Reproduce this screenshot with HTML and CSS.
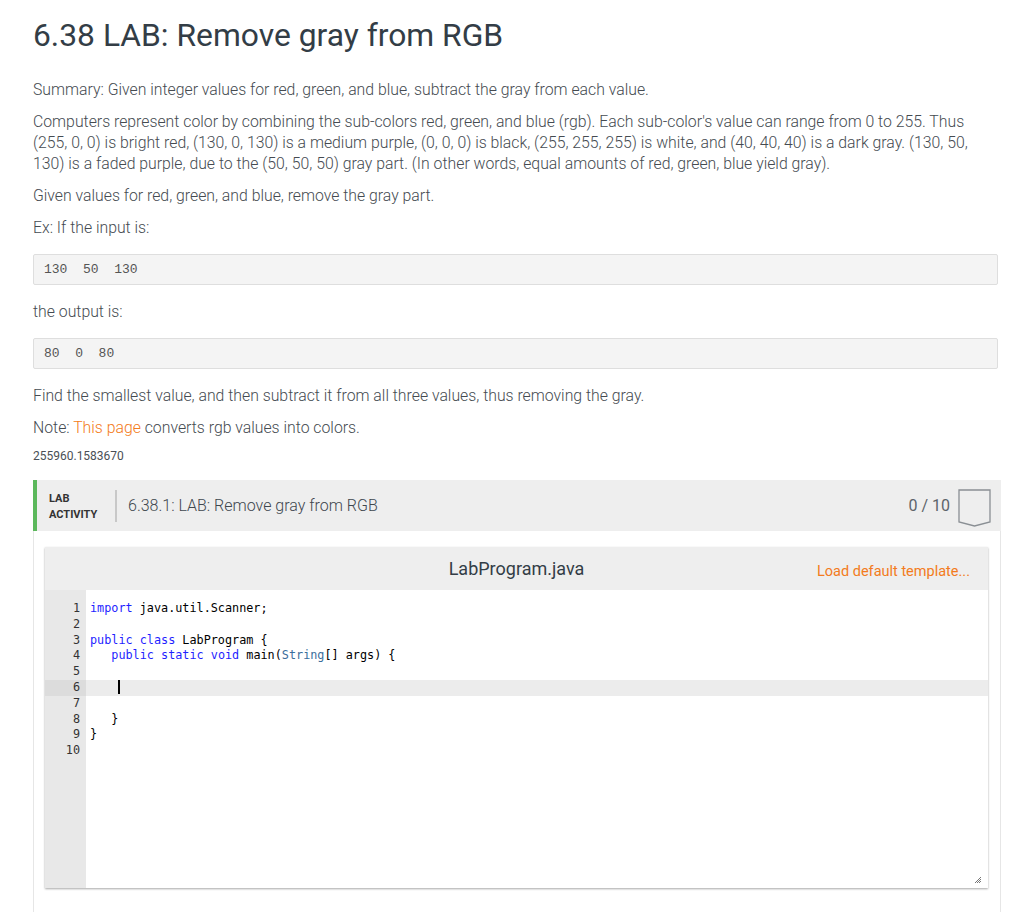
FILE: index.html
```html
<!DOCTYPE html>
<html lang="en">
<head>
<meta charset="utf-8">
<title>6.38 LAB: Remove gray from RGB</title>
<link rel="stylesheet" href="styles.css">
</head>
<body>
<main class="page">
  <h1 class="title">6.38 LAB: Remove gray from RGB</h1>
  <p>Summary: Given integer values for red, green, and blue, subtract the gray from each value.</p>
  <p>Computers represent color by combining the sub-colors red, green, and blue (rgb). Each sub-color's value can range from 0 to 255. Thus (255, 0, 0) is bright red, (130, 0, 130) is a medium purple, (0, 0, 0) is black, (255, 255, 255) is white, and (40, 40, 40) is a dark gray. (130, 50, 130) is a faded purple, due to the (50, 50, 50) gray part. (In other words, equal amounts of red, green, blue yield gray).</p>
  <p>Given values for red, green, and blue, remove the gray part.</p>
  <p>Ex: If the input is:</p>
  <pre class="sample">130  50  130</pre>
  <p>the output is:</p>
  <pre class="sample">80  0  80</pre>
  <p>Find the smallest value, and then subtract it from all three values, thus removing the gray.</p>
  <p>Note: <a class="link" href="#">This page</a> converts rgb values into colors.</p>
  <div class="ident">255960.1583670</div>

  <section class="lab">
    <header class="lab-head">
      <div class="lab-label">LAB<br>ACTIVITY</div>
      <div class="lab-sep"></div>
      <div class="lab-title">6.38.1: LAB: Remove gray from RGB</div>
      <div class="lab-score">0 / 10</div>
      <svg class="badge" width="33" height="38" viewBox="0 0 33 38" aria-hidden="true">
        <path d="M1 1 H32 V33 L16.5 37 L1 33 Z" fill="none" stroke="#8a8f94" stroke-width="1.3"/>
      </svg>
    </header>
    <div class="lab-body">
      <div class="editor">
        <div class="editor-head">
          <div class="filename">LabProgram.java</div>
          <a class="load" href="#">Load default template...</a>
        </div>
        <div class="code">
          <div class="gutter">
            <div class="ln">1</div><div class="ln">2</div><div class="ln">3</div><div class="ln">4</div><div class="ln">5</div><div class="ln active">6</div><div class="ln">7</div><div class="ln">8</div><div class="ln">9</div><div class="ln">10</div>
          </div>
          <div class="lines">
            <div class="line"><span class="kw">import</span> java.util.Scanner;</div>
            <div class="line"> </div>
            <div class="line"><span class="kw">public</span> <span class="kw">class</span> LabProgram {</div>
            <div class="line">   <span class="kw">public</span> <span class="kw">static</span> <span class="kw">void</span> main(<span class="ty">String</span>[] args) {</div>
            <div class="line"> </div>
            <div class="line active">    <span class="cursor"></span></div>
            <div class="line"> </div>
            <div class="line">   }</div>
            <div class="line">}</div>
            <div class="line"> </div>
          </div>
          <svg class="grip" width="8" height="8" viewBox="0 0 8 8" aria-hidden="true">
            <path d="M7 1 L1 7 M7 3 L3 7 M7 5 L5 7" stroke="#777" stroke-width="1"/>
          </svg>
        </div>
      </div>
    </div>
  </section>
</main>
</body>
</html>
```

FILE: styles.css
```css
* { box-sizing: border-box; }

html, body {
  margin: 0;
  padding: 0;
  background: #fff;
}

body {
  font-family: Roboto, "Liberation Sans", sans-serif;
  font-weight: 300;
  color: #454b51;
}

.page {
  padding: 15px 23px 0 33px;
}

.title {
  margin: 0 0 24px;
  font-size: 31.8px;
  line-height: 40px;
  font-weight: 400;
  color: #333d46;
}

p {
  margin: 0 0 11px;
  font-size: 15.8px;
  line-height: 21px;
  width: 965px;
}

.link {
  color: #f37b20;
  text-decoration: none;
}

.sample {
  margin: 16px 0;
  width: 965px;
  padding: 8px 10px;
  background: #f4f4f4;
  border: 1px solid #dedede;
  border-radius: 2px;
  font-family: "Liberation Mono", "DejaVu Sans Mono", monospace;
  font-size: 13px;
  line-height: 13px;
  color: #555;
  white-space: pre;
}

.ident {
  font-size: 12px;
  line-height: 14px;
  color: #4a4f55;
  font-weight: 400;
  margin-bottom: 17px;
}

.lab {
  width: 968px;
}

.lab-head {
  display: flex;
  align-items: center;
  height: 51px;
  background: #eeeeee;
  border-left: 4px solid #5cb85c;
  padding: 0 10px 0 12px;
}

.lab-label {
  font-size: 11px;
  line-height: 16px;
  font-weight: 700;
  color: #333;
  width: 66px;
  padding-top: 2px;
}

.lab-sep {
  width: 2px;
  height: 32px;
  background: #c8c8c8;
  margin-right: 11px;
}

.lab-title {
  flex: 1;
  font-size: 16px;
  color: #40474e;
  font-weight: 300;
}

.lab-score {
  font-size: 16px;
  color: #5d646a;
  font-weight: 400;
  margin-right: 8px;
}

.badge {
  display: block;
  margin-top: 4px;
}

.lab-body {
  border-left: 1px solid #e6e6e6;
  border-right: 1px solid #e6e6e6;
  padding: 16px 12px 40px 11px;
}

.editor {
  box-shadow: 0 1px 2px rgba(0, 0, 0, 0.35);
  width: 943px;
}

.editor-head {
  position: relative;
  display: flex;
  justify-content: center;
  align-items: center;
  height: 43px;
  background: #eeeeee;
}

.filename {
  font-size: 18px;
  font-weight: 400;
  color: #333d46;
}

.load {
  position: absolute;
  right: 18px;
  top: 16px;
  font-size: 14.5px;
  font-weight: 400;
  color: #f37b20;
  text-decoration: none;
}

.code {
  position: relative;
  display: flex;
  height: 298px;
  background: #fff;
  font-family: "DejaVu Sans Mono", "Liberation Mono", monospace;
  font-size: 11.8px;
  line-height: 15.8px;
}

.gutter {
  width: 41px;
  background: #e8e8e8;
  padding-top: 11px;
  color: #333;
}

.ln {
  text-align: right;
  padding-right: 6px;
  height: 15.8px;
}

.ln.active {
  background: #dcdcdc;
}

.lines {
  flex: 1;
  padding-top: 11px;
  color: #000;
}

.line {
  white-space: pre;
  height: 15.8px;
  padding-left: 4px;
}

.line.active {
  background: #ececec;
}

.kw { color: #1f1fff; }
.ty { color: #3b6e9c; }

.cursor {
  display: inline-block;
  width: 2px;
  height: 14px;
  background: #000;
  vertical-align: -3px;
}

.grip {
  position: absolute;
  right: 6px;
  bottom: 4px;
}
```
